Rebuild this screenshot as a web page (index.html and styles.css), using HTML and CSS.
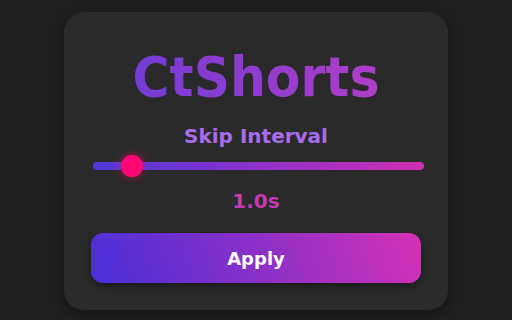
FILE: index.html
```html
<!DOCTYPE html>
<html>
<head>
<meta charset="utf-8">
<link rel="stylesheet" href="styles.css">
</head>
<body>
<div class="card">
  <h1 class="title">CtShorts</h1>
  <div class="label">Skip Interval</div>
  <div class="slider">
    <div class="track"></div>
    <div class="thumb" style="left: 28px"></div>
  </div>
  <div class="value">1.0s</div>
  <button class="apply">Apply</button>
</div>
</body>
</html>
```
FILE: styles.css
```css
html, body {
  margin: 0;
  padding: 0;
  background: #202020;
  width: 512px;
  height: 320px;
  overflow: hidden;
}
body {
  padding-top: 12px;
  box-sizing: border-box;
  font-family: "DejaVu Sans", sans-serif;
  font-weight: bold;
}
.card {
  width: 384px;
  height: 298px;
  margin: 0 auto;
  box-sizing: border-box;
  background: #2a2a2a;
  border-radius: 20px;
  box-shadow: 0 4px 16px rgba(0,0,0,0.45);
  padding: 37px 27px 27px;
  display: flex;
  flex-direction: column;
  align-items: stretch;
}
.title {
  margin: 0;
  font-family: "DejaVu Sans Condensed", "DejaVu Sans", sans-serif;
  font-size: 56px;
  line-height: 56px;
  text-align: center;
  font-weight: bold;
  background: linear-gradient(90deg, #6a3bd8, #b83ec6);
  -webkit-background-clip: text;
  background-clip: text;
  color: transparent;
}
.label {
  margin-top: 19px;
  font-size: 20px;
  line-height: 24px;
  text-align: center;
  color: #a86bec;
}
.slider {
  position: relative;
  margin-top: 7px;
  margin-left: 2px;
  margin-right: -3px;
  height: 22px;
  display: flex;
  align-items: center;
}
.track {
  flex: 1;
  height: 8px;
  border-radius: 4px;
  background: linear-gradient(90deg, #4b3bd6, #7a33d0 35%, #d030b2);
}
.thumb {
  position: absolute;
  top: 0;
  width: 22px;
  height: 22px;
  border-radius: 50%;
  background: #ff0876;
  box-shadow: 0 0 8px rgba(255, 0, 120, 0.6);
}
.value {
  margin-top: 12px;
  font-size: 20px;
  line-height: 24px;
  text-align: center;
  color: #c23bb2;
}
.apply {
  margin-top: 20px;
  height: 50px;
  border: none;
  border-radius: 12px;
  background: linear-gradient(70deg, #4a2fd8, #8a30c8 50%, #d530b5);
  color: #ffffff;
  font-family: "DejaVu Sans", sans-serif;
  font-weight: bold;
  font-size: 18px;
  box-shadow: 0 4px 10px rgba(0,0,0,0.35);
  padding: 0;
}
```
